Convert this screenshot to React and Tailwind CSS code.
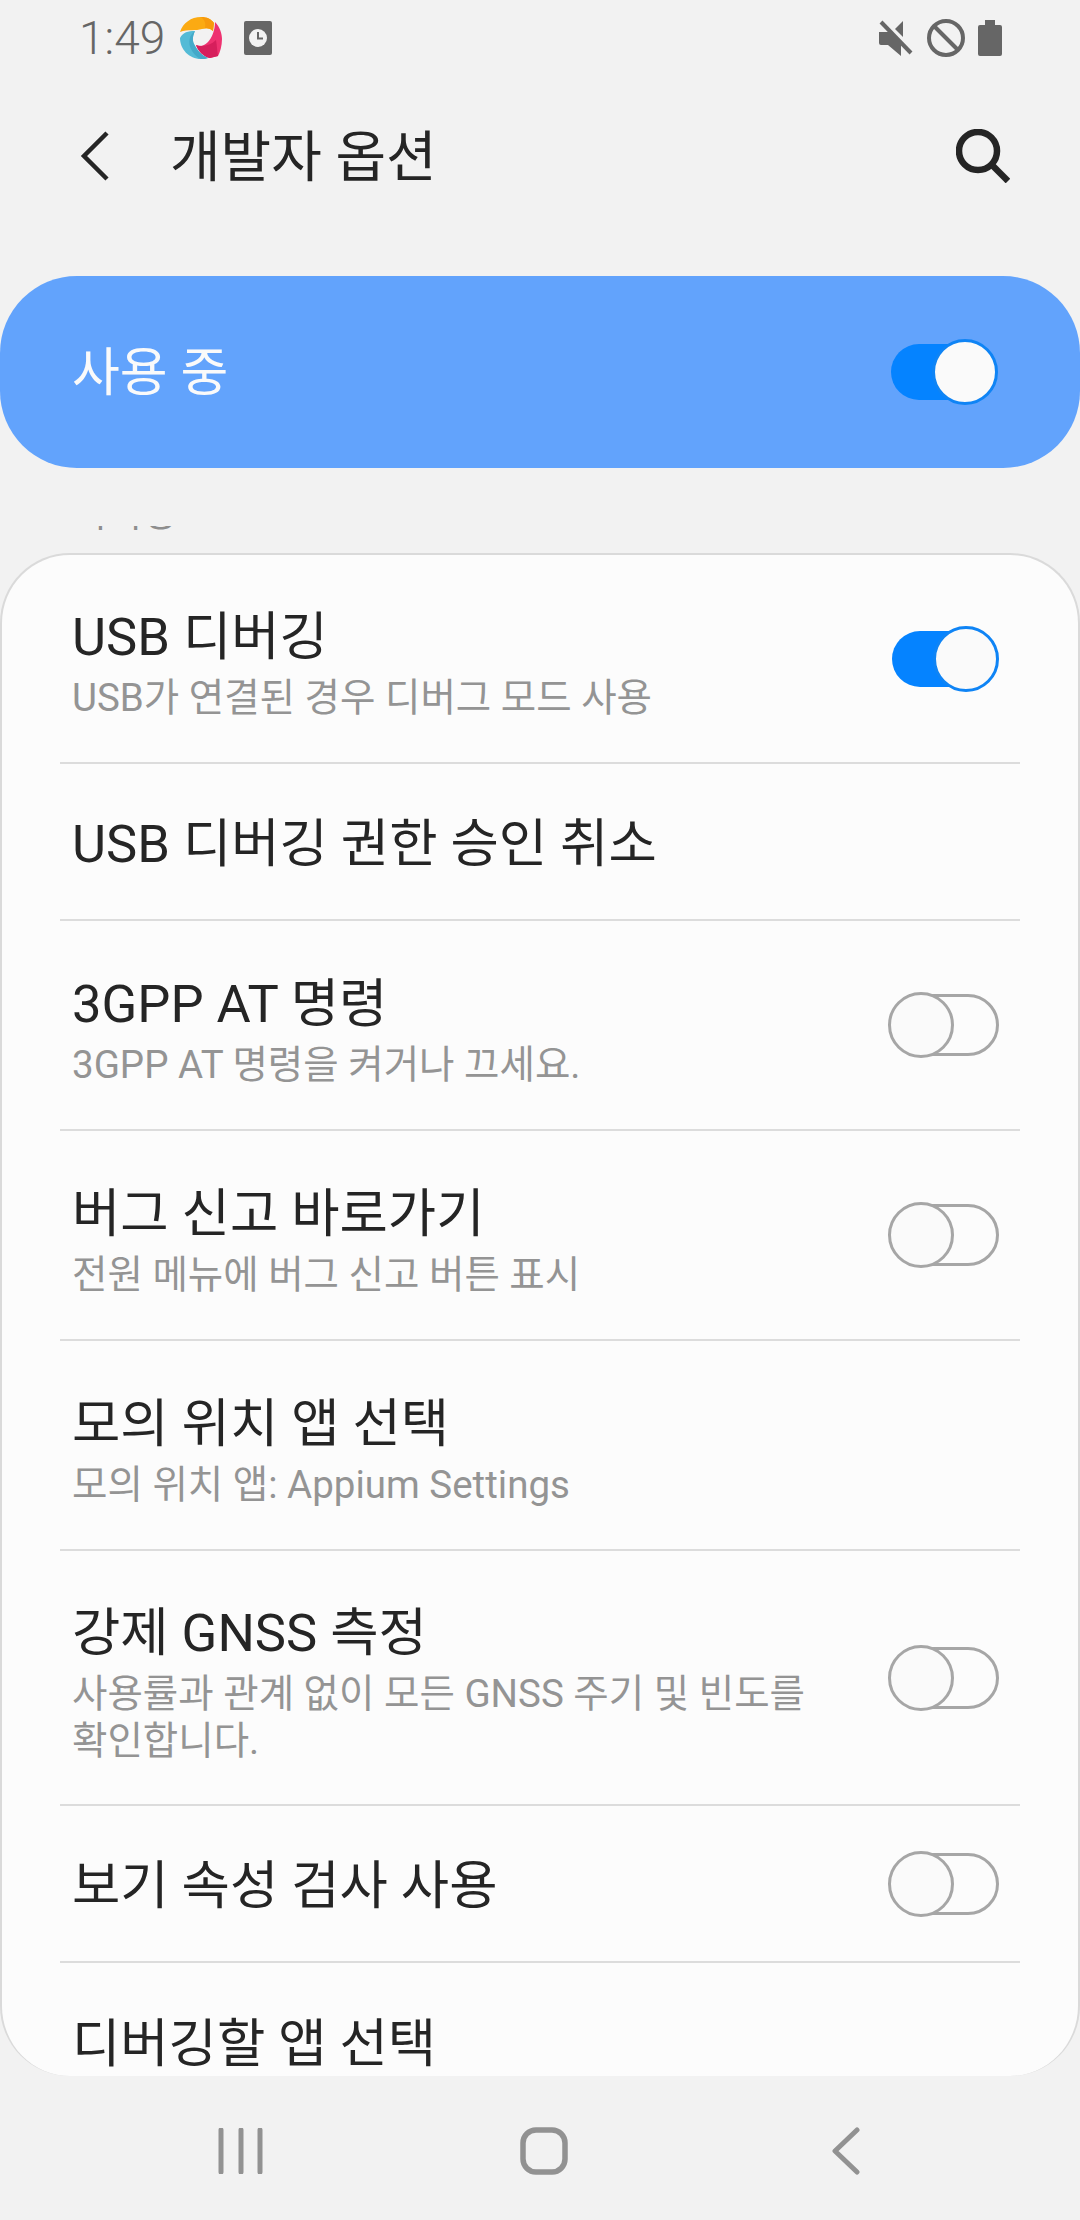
import React from 'react';

const Toggle = ({ on }) => {
  if (on) {
    return (
      <div className="relative w-[107px] h-[66px] shrink-0">
        <div className="absolute left-0 top-[5px] w-[90px] h-[56px] rounded-full bg-[#0583ff]" />
        <div className="absolute right-0 top-0 w-[66px] h-[66px] rounded-full border-[3px] border-[#0f84f5] bg-[#fafafa]" />
      </div>
    );
  }
  return (
    <div className="relative w-[111px] h-[66px] shrink-0">
      <div className="absolute right-0 top-[2px] w-[90px] h-[62px] rounded-r-full border-[3px] border-[#a6a6a6]" />
      <div className="absolute left-0 top-0 w-[66px] h-[66px] rounded-full border-[3px] border-[#a6a6a6] bg-[#fafafa]" />
    </div>
  );
};

const Row = ({ title, sub, toggle, on, h, last }) => (
  <div className={`${h} mx-[58px] flex items-center justify-between shrink-0 ${last ? '' : 'border-b-2 border-[#dcdcdc]'}`}>
    <div className={`pl-[12px] min-w-0 ${sub ? 'pt-[11px]' : 'pt-[5px]'}`}>
      <div className="text-[52.5px] leading-[60px] text-[#252525]">{title}</div>
      {sub && <div className="text-[38.5px] leading-[47px] text-[#949494] mt-[7px] w-[760px] break-keep">{sub}</div>}
    </div>
    {toggle && <div className="pr-[21px]"><Toggle on={on} /></div>}
  </div>
);

export default function App() {
  return (
    <div className="w-[1080px] h-[2220px] bg-[#f2f2f2] overflow-hidden flex flex-col font-['Roboto','Noto_Sans_CJK_KR',sans-serif]">
      {/* status bar */}
      <div className="h-[76px] flex items-center justify-between pl-[79px] pr-[78px] shrink-0">
        <div className="flex items-center">
          <span className="text-[46px] leading-none text-[#666666] font-light w-[101px]">1:49</span>
          <svg width="42" height="42" viewBox="0 0 42 42">
            <path d="M0 15C3 6 11 0 21 0c6 0 10 2 13 6l-1 8c-3-3-7-3-11-2-6 2-14 0-22 3z" fill="#fbaa12" />
            <path d="M21 0c6 0 10 2 13 6l-1 8c-3-3-5-3-8-3 1-4 0-8-4-11z" fill="#f79a0c" />
            <path d="M35 5c5 5 7 12 7 17 0 7-2 13-4 17l-8 2c-6-1-12-7-14-13 4 2 8 1 12-3 4-4 7-12 7-20z" fill="#ee3270" />
            <path d="M16 28c6 2 14 1 20-5 1 5 1 11 2 16l-8 2c-6-1-12-7-14-13z" fill="#d61f5c" />
            <path d="M15 14C8 14 3 15 0 21c0 11 9 21 21 21 3 0 5 0 7-1-6-2-11-8-14-14-2-4-1-9 1-13z" fill="#54bbd6" />
            <path d="M15 14c-6 4-7 12-4 18 2 4 5 8 10 10h3l4-1c-6-2-11-8-14-14-2-4-1-9 1-13z" fill="#43a9c9" />
          </svg>
          <svg width="28" height="34" viewBox="0 0 28 34" className="ml-[22px]">
            <rect width="28" height="34" rx="2" fill="#666666" />
            <circle cx="14" cy="17" r="9" fill="#f2f2f2" />
            <path d="M14 11v6.5h5" stroke="#666666" strokeWidth="2" fill="none" />
          </svg>
        </div>
        <div className="flex items-center">
          <svg width="34" height="36" viewBox="0 0 34 36">
            <path d="M0 12h8l3-1 11 11v14L9 25H2a2 2 0 0 1-2-2z" fill="#666666" />
            <path d="M16 9 24 1v16z" fill="#666666" />
            <path d="M2 2 32 33" stroke="#666666" strokeWidth="4" />
          </svg>
          <svg width="38" height="38" viewBox="0 0 38 38" className="ml-[14px]">
            <circle cx="19" cy="19" r="17" stroke="#666666" strokeWidth="4" fill="none" />
            <path d="M8 8l22 22" stroke="#666666" strokeWidth="4" />
          </svg>
          <svg width="24" height="36" viewBox="0 0 24 36" className="ml-[13px]">
            <path d="M7 0h10v5h5a2 2 0 0 1 2 2v27a2 2 0 0 1-2 2H2a2 2 0 0 1-2-2V7a2 2 0 0 1 2-2h5z" fill="#666666" />
          </svg>
        </div>
      </div>

      {/* app bar */}
      <div className="h-[200px] shrink-0 flex items-start pt-[35px]">
        <div className="flex items-center justify-between w-full pl-[80px] pr-[70px] h-[90px]">
          <div className="flex items-center">
            <svg width="30" height="50" viewBox="0 0 30 50">
              <path d="M27 2 4 25l23 23" stroke="#252525" strokeWidth="4.5" fill="none" />
            </svg>
            <span className="ml-[60px] pt-[3px] text-[55px] text-[#252525] leading-none">개발자 옵션</span>
          </div>
          <svg width="54" height="54" viewBox="0 0 54 54">
            <circle cx="22" cy="22" r="19" stroke="#252525" strokeWidth="6.5" fill="none" />
            <path d="M36 36l16 16" stroke="#252525" strokeWidth="6.5" />
          </svg>
        </div>
      </div>

      {/* master switch */}
      <div className="h-[192px] shrink-0 rounded-[77px] bg-[#62a3fc] flex items-center justify-between pl-[72px] pr-[82px]">
        <span className="text-[52px] leading-none pt-[3px] text-[#fafafa]">사용 중</span>
        <Toggle on />
      </div>

      {/* category title, scrolled almost fully out of view */}
      <div className="h-[85px] shrink-0 relative">
        <div className="absolute left-[72px] bottom-[23px] h-[4px] overflow-hidden w-[200px]">
          <div className="absolute -bottom-[2px] text-[38px] leading-[38px] text-[#8e8e8e]">디버깅</div>
        </div>
      </div>

      {/* list card */}
      <div className="h-[1523px] shrink-0 overflow-hidden rounded-[70px] border-2 border-[#dadada] border-b-0 bg-[#fcfcfc] flex flex-col">
        <Row h="h-[209px]" title="USB 디버깅" sub="USB가 연결된 경우 디버그 모드 사용" toggle on />
        <Row h="h-[157px]" title="USB 디버깅 권한 승인 취소" />
        <Row h="h-[210px]" title="3GPP AT 명령" sub="3GPP AT 명령을 켜거나 끄세요." toggle />
        <Row h="h-[210px]" title="버그 신고 바로가기" sub="전원 메뉴에 버그 신고 버튼 표시" toggle />
        <Row h="h-[210px]" title="모의 위치 앱 선택" sub="모의 위치 앱: Appium Settings" />
        <Row h="h-[255px]" title="강제 GNSS 측정" sub="사용률과 관계 없이 모든 GNSS 주기 및 빈도를 확인합니다." toggle />
        <Row h="h-[157px]" title="보기 속성 검사 사용" toggle />
        <Row h="h-[157px]" title="디버깅할 앱 선택" last />
      </div>

      {/* nav bar */}
      <div className="flex-1 flex items-center justify-between pl-[218px] pr-[220px] pt-[5px]">
        <svg width="45" height="46" viewBox="0 0 45 46">
          <path d="M3 2v42M23 2v42M42 2v42" stroke="#929292" strokeWidth="5" strokeLinecap="round" />
        </svg>
        <svg width="48" height="48" viewBox="0 0 48 48" className="mr-[8px]">
          <rect x="3" y="3" width="42" height="42" rx="13" stroke="#929292" strokeWidth="5.5" fill="none" />
        </svg>
        <svg width="28" height="48" viewBox="0 0 28 48">
          <path d="M25 3 3 24l22 21" stroke="#929292" strokeWidth="5" fill="none" strokeLinecap="round" strokeLinejoin="round" />
        </svg>
      </div>
    </div>
  );
}
